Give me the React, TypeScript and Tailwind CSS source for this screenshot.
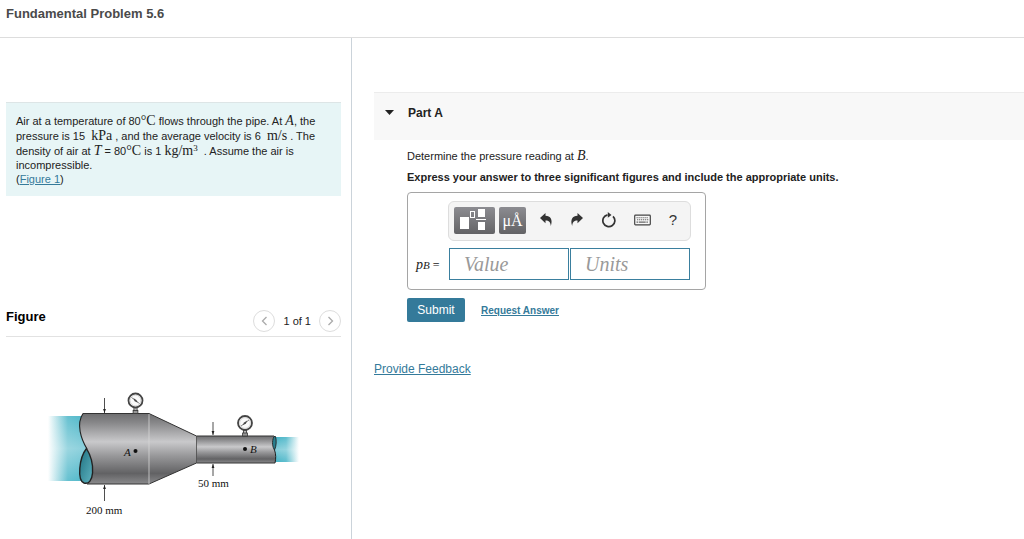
import { useState } from "react";
import type { ReactNode } from "react";

function MathText({ children, italic = false }: { children: ReactNode; italic?: boolean }) {
  return (
    <span
      className={
        italic
          ? "font-['Liberation_Serif',serif] text-[14px] leading-[15px] italic"
          : "font-['Liberation_Serif',serif] text-[14px] leading-[15px]"
      }
    >
      {children}
    </span>
  );
}

function Gauge({ x, y, flip = false }: { x: number; y: number; flip?: boolean }) {
  return (
    <g transform={`translate(${x} ${y})`}>
      <rect x="-1.6" y="7" width="3.2" height="4" fill="#bbb" stroke="#333" strokeWidth="0.8" />
      <rect x="-2.4" y="10" width="4.8" height="3" fill="#999" stroke="#333" strokeWidth="0.8" />
      <circle r="7" fill="#fff" stroke="#444" strokeWidth="1.8" />
      <circle r="5.4" fill="#fafafa" stroke="#bbb" strokeWidth="0.6" />
      <g transform={flip ? "scale(-1 1)" : undefined}>
        <path d="M-4 -3 L4 3" stroke="#555" strokeWidth="0.7" />
        <path d="M-2.2 -2.6 L0.8 -0.4 L2.4 2.2 L-0.8 0.8Z" fill="#444" />
      </g>
    </g>
  );
}

function Arrow({ x, from, to }: { x: number; from: number; to: number }) {
  const back = to > from ? -4 : 4;
  return (
    <g stroke="#222" strokeWidth="0.8" fill="#222">
      <path d={`M${x} ${from} V${to}`} />
      <path d={`M${x} ${to} l-1.4 ${back} h2.8Z`} stroke="none" />
    </g>
  );
}

function PipeDrawing() {
  return (
    <svg
      viewBox="6 337 335 190"
      role="img"
      aria-label="Pipe narrowing from 200 mm at A to 50 mm at B"
      className="block w-full font-['Liberation_Serif',serif]"
    >
      <defs>
        <linearGradient id="steel" x1="0" y1="0" x2="0" y2="1">
          <stop offset="0" stopColor="#6e6e70" />
          <stop offset="0.12" stopColor="#858587" />
          <stop offset="0.4" stopColor="#c9c9cb" />
          <stop offset="0.6" stopColor="#98989a" />
          <stop offset="0.85" stopColor="#626264" />
          <stop offset="1" stopColor="#8a8a8c" />
        </linearGradient>
        <linearGradient id="airIn" x1="0" y1="0" x2="1" y2="0">
          <stop offset="0" stopColor="#4bb6c8" stopOpacity="0" />
          <stop offset="0.45" stopColor="#4bb6c8" stopOpacity="0.85" />
          <stop offset="1" stopColor="#45b3c6" />
        </linearGradient>
        <linearGradient id="airOut" x1="0" y1="0" x2="1" y2="0">
          <stop offset="0" stopColor="#3fb0c4" />
          <stop offset="0.5" stopColor="#4bb6c8" stopOpacity="0.9" />
          <stop offset="1" stopColor="#4bb6c8" stopOpacity="0" />
        </linearGradient>
        <linearGradient id="sheen" x1="0" y1="0" x2="0" y2="1">
          <stop offset="0" stopColor="#fff" stopOpacity="0" />
          <stop offset="0.5" stopColor="#fff" stopOpacity="0.35" />
          <stop offset="1" stopColor="#fff" stopOpacity="0" />
        </linearGradient>
        <linearGradient id="mouth" x1="0" y1="0" x2="1" y2="1">
          <stop offset="0" stopColor="#1e7080" />
          <stop offset="1" stopColor="#5fb3c0" />
        </linearGradient>
      </defs>

      <rect x="48" y="416" width="44" height="65" fill="url(#airIn)" />
      <rect x="48" y="416" width="44" height="65" fill="url(#sheen)" />
      <rect x="273" y="437" width="26" height="25" fill="url(#airOut)" />
      <rect x="273" y="437" width="26" height="25" fill="url(#sheen)" />

      {/* wide section, cut open on the left */}
      <path
        d="M83 413.5 H149 V484 H87 C93 480 95 464 87 449 C82 440 76 425 83 413.5Z"
        fill="url(#steel)"
      />
      <path d="M149 413.5 L196.500 436 V463 L149 484Z" fill="url(#steel)" />
      <path
        d="M196.500 436 H274 C272 442 272 447 274.500 450 C276 454 276 459 275 463 H196.500Z"
        fill="url(#steel)"
      />
      <path d="M83 413.5 H149 L196.500 436 H274 M87 484 H149 L196.500 463 H275" fill="none" stroke="#333" strokeWidth="1" />
      <path d="M149 414 V484" stroke="#d5d5d5" strokeWidth="0.8" />
      <path d="M196.500 436 V463" stroke="#444" strokeWidth="0.8" />
      <path d="M83 413.5 C76 424 81 439 87 449" fill="none" stroke="#222" strokeWidth="1.1" />
      <path
        d="M86.500 448.500 C79 458 77 480 84 483 C94 486 96 464 86.500 448.500Z"
        fill="url(#mouth)"
        stroke="#222"
        strokeWidth="1.4"
      />
      <path
        d="M274 436.500 C271.500 442 272.500 447 274.500 450 C276.500 446 276.500 440 275.500 436.500Z"
        fill="#287e8e"
        stroke="#222"
        strokeWidth="0.9"
      />
      <path d="M274.500 450 C276 454 276 459 275 463" fill="none" stroke="#222" strokeWidth="1" />

      <Gauge x={135.5} y={400.5} />
      <Gauge x={245} y={423} flip />

      <Arrow x={104.5} from={398} to={413} />
      <Arrow x={104.5} from={501} to={485} />
      <Arrow x={213} from={422} to={435} />
      <Arrow x={213} from={476} to={464} />

      <g fill="#111" fontSize="11">
        <circle cx="135.500" cy="451" r="2" />
        <text x="124" y="456" fontStyle="italic">A</text>
        <circle cx="245" cy="449" r="2" />
        <text x="250" y="453" fontStyle="italic">B</text>
        <text x="86" y="514">200 mm</text>
        <text x="198" y="487">50 mm</text>
      </g>
    </svg>
  );
}

function PagerIcon({ next = false }: { next?: boolean }) {
  return (
    <svg viewBox="0 0 7 10" className={next ? "h-2.5 w-[7px] -scale-x-100" : "h-2.5 w-[7px]"} aria-hidden>
      <path d="M5.500 1 L1.500 5 L5.500 9" fill="none" stroke="#aaa" strokeWidth="1.300" />
    </svg>
  );
}

function UndoIcon({ redo = false }: { redo?: boolean }) {
  return (
    <svg viewBox="0 0 14 14" className={redo ? "size-3.5 -scale-x-100" : "size-3.5"} aria-hidden>
      <path d="M1 5 L6.500 0 V2.800 C11.500 3 14 6.500 11.800 13 C11.500 9.300 10 7.600 6.500 7.600 V10.200Z" fill="#333" />
    </svg>
  );
}

function ResetIcon() {
  return (
    <svg viewBox="0 0 16 16" className="size-4" aria-hidden>
      <path d="M12 4.300 A6 6 0 1 1 6.500 2.800" fill="none" stroke="#333" strokeWidth="1.700" />
      <path d="M6.800 0 L10.500 3 L6.800 5.800Z" fill="#333" />
    </svg>
  );
}

function KeyboardIcon() {
  return (
    <svg viewBox="0 0 17 12" className="h-3 w-[17px]" aria-hidden>
      <rect x="0.700" y="1.200" width="15.600" height="9.600" rx="0.800" fill="#f8f8f8" stroke="#444" strokeWidth="1.200" />
      <path d="M2.500 3.700 H14.500 M3 5.700 H14.500" stroke="#666" strokeWidth="1.100" strokeDasharray="1.300 0.700" />
      <path d="M2.500 8.200 H14.500" stroke="#666" strokeWidth="1.200" strokeDasharray="1.500 0.700 7 0.700" />
    </svg>
  );
}

function TemplateIcon() {
  return (
    <svg viewBox="0 0 41 27" className="h-[27px] w-[41px]" aria-hidden>
      <rect x="6" y="10" width="9" height="12" fill="#fff" />
      <rect x="16.500" y="4.500" width="4" height="6" fill="none" stroke="#fff" />
      <rect x="24" y="2" width="7" height="8" fill="#fff" />
      <rect x="22" y="12" width="10" height="1" fill="#fff" />
      <rect x="24" y="15" width="7" height="8" fill="#fff" />
    </svg>
  );
}

const FIELD =
  "h-8 w-[120px] border border-[#3a7f9e] bg-white px-3.5 font-['Liberation_Serif',serif] text-[20px] text-[#333] italic outline-none placeholder:text-[#999]";

function AnswerForm() {
  const [value, setValue] = useState("");
  const [units, setUnits] = useState("");

  return (
    <form onSubmit={(e) => e.preventDefault()}>
      <div className="mt-[7px] w-[299px] rounded border border-[#a5a5a5] pt-2 pr-3.5 pb-[9px] pl-2">
        <div
          role="toolbar"
          className="ml-8 flex h-10 items-center rounded-md border border-[#ddd] bg-[#f4f4f4] pb-0.5 pl-[5px]"
        >
          <button
            type="button"
            aria-label="Templates"
            className="rounded-xs bg-linear-to-b from-[#8c8c91] to-[#636366]"
          >
            <TemplateIcon />
          </button>
          <button
            type="button"
            aria-label="Symbols"
            className="ml-1 h-[27px] w-[27px] rounded-xs bg-linear-to-b from-[#8c8c91] to-[#636366] font-['Liberation_Serif',serif] text-[16px] leading-[27px] text-white"
          >
            μÅ
          </button>
          <div className="flex flex-1 items-center justify-between pr-[13px] pl-[13px]">
            <button type="button" aria-label="Undo">
              <UndoIcon />
            </button>
            <button type="button" aria-label="Redo">
              <UndoIcon redo />
            </button>
            <button type="button" aria-label="Reset">
              <ResetIcon />
            </button>
            <button type="button" aria-label="Keyboard shortcuts">
              <KeyboardIcon />
            </button>
            <button type="button" aria-label="Help" className="text-[15px] text-[#333]">
              ?
            </button>
          </div>
        </div>
        <div className="mt-[7px] flex items-center">
          <label
            htmlFor="value"
            className="w-[33px] shrink-0 font-['Liberation_Serif',serif] text-[14px] whitespace-nowrap"
          >
            <i>p</i>
            <i className="text-[11px]">B</i>
            <span className="text-[12px]"> =</span>
          </label>
          <input
            id="value"
            className={FIELD}
            placeholder="Value"
            value={value}
            onChange={(e) => setValue(e.target.value)}
          />
          <input
            aria-label="Units"
            className={`${FIELD} ml-px`}
            placeholder="Units"
            value={units}
            onChange={(e) => setUnits(e.target.value)}
          />
        </div>
      </div>
      <div className="mt-2 flex items-center gap-4">
        <button type="submit" className="h-6 w-[58px] rounded-xs bg-[#347a9a] text-[12px] text-white">
          Submit
        </button>
        <a href="#answer" className="text-[10px] font-bold text-[#347a9a] underline">
          Request Answer
        </a>
      </div>
    </form>
  );
}

export default function App() {
  return (
    <div className="flex min-h-screen flex-col bg-white font-['Liberation_Sans',Arial,sans-serif] text-[11px] text-[#222]">
      <header className="h-[38px] border-b border-[#ddd] px-1.5 pt-1">
        <h1 className="text-[13px] leading-5 font-bold text-[#4a4a4a]">Fundamental Problem 5.6</h1>
      </header>

      <div className="flex flex-1">
        <aside className="w-[352px] shrink-0 border-r border-[#cbd3da] pt-16 pr-[10px] pl-1.5">
          <section className="h-[94px] border-t border-[#dde5e6] bg-[#e7f5f6] px-[10px] pt-2.5 leading-[14px] whitespace-nowrap">
            Air at a temperature of 80<MathText>°C</MathText> flows through the pipe. At{" "}
            <MathText italic>A</MathText>, the
            <br />
            pressure is 15 &nbsp;<MathText>kPa</MathText> , and the average velocity is 6 &nbsp;
            <MathText>m/s</MathText> . The
            <br />
            density of air at <MathText italic>T</MathText> = 80<MathText>°C</MathText> is 1{" "}
            <MathText>
              kg/m<sup className="text-[9px]">3</sup>
            </MathText>{" "}
            &nbsp;. Assume the air is
            <br />
            incompressible.
            <br />(
            <a href="#figure" className="text-[#347a9a] underline">
              Figure 1
            </a>
            )
          </section>

          <section id="figure" className="mt-28">
            <div className="flex h-[29px] items-start justify-between border-b border-[#e2e2e2]">
              <h2 className="text-[13px] leading-[17px] font-bold text-black">Figure</h2>
              <div className="flex items-center gap-2 pt-0.5">
                <button
                  type="button"
                  aria-label="Previous figure"
                  className="flex size-[22px] items-center justify-center rounded-full border border-[#ddd]"
                >
                  <PagerIcon />
                </button>
                <span>1 of 1</span>
                <button
                  type="button"
                  aria-label="Next figure"
                  className="flex size-[22px] items-center justify-center rounded-full border border-[#ddd]"
                >
                  <PagerIcon next />
                </button>
              </div>
            </div>
            <PipeDrawing />
          </section>
        </aside>

        <main className="min-w-0 flex-1 pt-[54px] pl-[22px]">
          <div className="flex h-12 items-center gap-3.5 border-t border-[#ececec] bg-[#f8f8f8] pb-2 pl-[11px]">
            <svg viewBox="0 0 9 5" className="h-[5px] w-[9px]" aria-hidden>
              <path d="M0 0 H9 L4.500 5Z" fill="#222" />
            </svg>
            <h2 className="text-[12px] font-bold">Part A</h2>
          </div>
          <div className="pt-2 pl-[33px]">
            <p className="leading-4">
              Determine the pressure reading at <MathText italic>B</MathText>.
            </p>
            <p className="mt-[5px] leading-4 font-bold">
              Express your answer to three significant figures and include the appropriate units.
            </p>
            <AnswerForm />
          </div>
          <a href="#feedback" className="mt-[39px] inline-block text-[12px] leading-4 text-[#347a9a] underline">
            Provide Feedback
          </a>
        </main>
      </div>
    </div>
  );
}
